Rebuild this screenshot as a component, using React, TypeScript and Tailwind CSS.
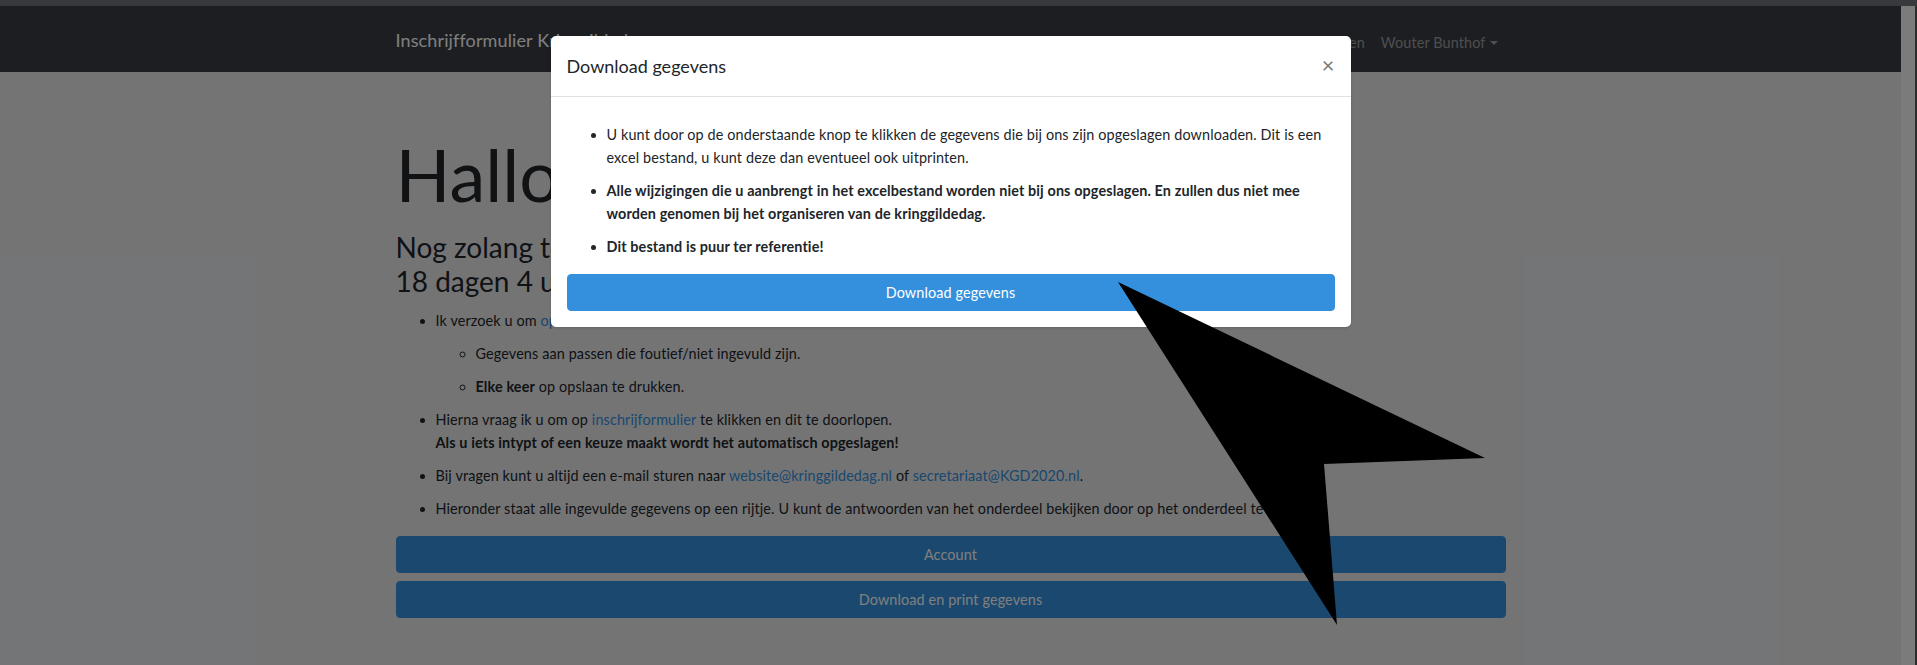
export default function App() {
  return (
    <div className="relative h-[665px] w-[1917px] overflow-hidden bg-[#38393d] font-['Lato',sans-serif]">
      <div className="h-[6px]" />
      <div className="flex h-[659px]">
        <div className="relative flex-1 overflow-hidden bg-[#e8e9eb] text-[14.4px] leading-[1.6] tracking-[0.12px] text-[#212529]">
          {/* navbar */}
          <nav className="flex h-[66px] items-center bg-[#383c42]">
            <div className="mx-auto flex w-[1140px] items-center px-[15px]">
              <span className="mt-[3px] text-[18px] text-white">Inschrijfformulier Kringgildedag</span>
              <ul className="ml-auto mt-[8px] flex text-white/50">
                <li className="px-2">Gegevens downloaden</li>
                <li className="flex items-center px-2">
                  Wouter Bunthof
                  <span className="ml-[4px] inline-block h-0 w-0 border-x-[4.3px] border-t-[4.3px] border-x-transparent border-t-white/50" />
                </li>
              </ul>
            </div>
          </nav>

          {/* page content */}
          <main className="mx-auto w-[1140px] px-[15px]">
            <h1 className="mt-[59px] text-[72px] font-normal leading-[1.2] tracking-normal">Hallo Wouter Bunthof</h1>
            <h3 className="mt-[14px] text-[28px] font-normal leading-[1.2] tracking-normal">
              Nog zolang tot de kringgildedag:
              <br />
              18 dagen 4 uur en 12 minuten
            </h3>
            <ul className="mb-4 list-disc pl-10">
              <li className="mt-[10px]">
                Ik verzoek u om <a className="text-[#3490dc]">op account</a> te klikken en daar:
                <ul className="list-[circle] pl-10">
                  <li className="mt-[10px]">Gegevens aan passen die foutief/niet ingevuld zijn.</li>
                  <li className="mt-[10px]">
                    <b>Elke keer</b> op opslaan te drukken.
                  </li>
                </ul>
              </li>
              <li className="mt-[10px]">
                Hierna vraag ik u om op <a className="text-[#3490dc]">inschrijformulier</a> te klikken en dit te doorlopen.
                <br />
                <b>Als u iets intypt of een keuze maakt wordt het automatisch opgeslagen!</b>
              </li>
              <li className="mt-[10px]">
                Bij vragen kunt u altijd een e-mail sturen naar{' '}
                <a className="text-[#3490dc]">website@kringgildedag.nl</a> of{' '}
                <a className="text-[#3490dc]">secretariaat@KGD2020.nl</a>.
              </li>
              <li className="mt-[10px]">
                Hieronder staat alle ingevulde gegevens op een rijtje. U kunt de antwoorden van het onderdeel bekijken door op het onderdeel te klikken.
              </li>
            </ul>
            <button className="block w-full rounded-[4px] border border-[#3490dc] bg-[#3490dc] py-[6px] text-white">
              Account
            </button>
            <button className="mt-2 block w-full rounded-[4px] border border-[#3490dc] bg-[#3490dc] py-[6px] text-white">
              Download en print gegevens
            </button>
          </main>

          {/* backdrop */}
          <div className="absolute inset-0 bg-black/50" />

          {/* modal */}
          <div className="absolute left-1/2 top-[30px] w-[800px] -translate-x-1/2 rounded-[5px] bg-white shadow-sm">
            <div className="flex items-center justify-between border-b border-[#dee2e6] p-4">
              <h5 className="text-[18px] font-normal leading-[28px] tracking-normal">Download gegevens</h5>
              <span className="text-[21.6px] leading-none text-[#777]">×</span>
            </div>
            <div className="p-4">
              <ul className="mb-4 list-disc pl-10">
                <li className="mt-[10px]">
                  U kunt door op de onderstaande knop te klikken de gegevens die bij ons zijn opgeslagen downloaden. Dit is een excel bestand, u kunt deze dan eventueel ook uitprinten.
                </li>
                <li className="mt-[10px] font-bold">
                  Alle wijzigingen die u aanbrengt in het excelbestand worden niet bij ons opgeslagen. En zullen dus niet mee worden genomen bij het organiseren van de kringgildedag.
                </li>
                <li className="mt-[10px] font-bold">Dit bestand is puur ter referentie!</li>
              </ul>
              <button className="block w-full rounded-[4px] border border-[#3490dc] bg-[#3490dc] py-[6px] text-white">
                Download gegevens
              </button>
            </div>
          </div>
        </div>
        {/* scrollbar */}
        <div className="w-[14px] bg-[#7b7b7b]" />
        <div className="w-[2px] bg-[#2c2c2c]" />
      </div>

      {/* cursor annotation */}
      <svg className="pointer-events-none absolute inset-0" width="1917" height="665" viewBox="0 0 1917 665">
        <polygon points="1118,282 1485,458 1324,464 1337,625" fill="#000" />
      </svg>
    </div>
  )
}
